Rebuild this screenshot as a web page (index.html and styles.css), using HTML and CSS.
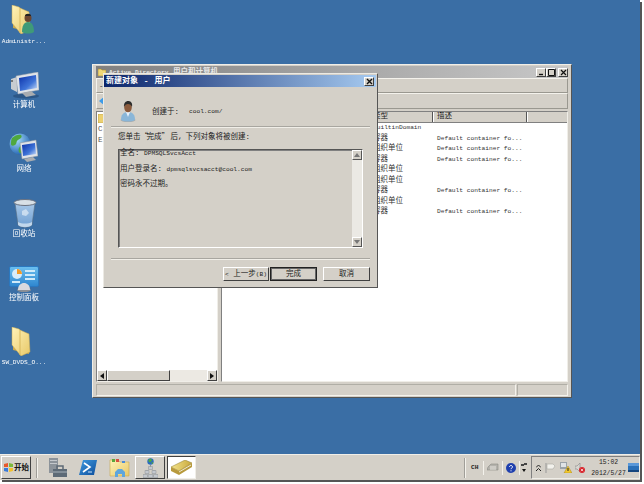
FILE: index.html
```html
<!DOCTYPE html>
<html lang="zh">
<head>
<meta charset="utf-8">
<title>新建对象 - 用户</title>
<link rel="stylesheet" href="styles.css">
</head>
<body>
<svg class="defs" aria-hidden="true">
  <defs>
    <linearGradient id="gFolder" x1="0" y1="0" x2="1" y2="1"><stop offset="0" stop-color="#fff3b8"/><stop offset="1" stop-color="#e8c868"/></linearGradient>
    <linearGradient id="gScreen" x1="0" y1="0" x2="1" y2="1"><stop offset="0" stop-color="#0a2fa8"/><stop offset=".6" stop-color="#3f74d8"/><stop offset="1" stop-color="#cfe2fa"/></linearGradient>
    <linearGradient id="gBin" x1="0" y1="0" x2="0" y2="1"><stop offset="0" stop-color="#a8c8e8"/><stop offset="1" stop-color="#6f9fd2"/></linearGradient>
    <linearGradient id="gPanel" x1="0" y1="0" x2="0" y2="1"><stop offset="0" stop-color="#6cc0f0"/><stop offset="1" stop-color="#2e86cf"/></linearGradient>
    <radialGradient id="gGlobe" cx=".35" cy=".3" r=".8"><stop offset="0" stop-color="#a8dcf8"/><stop offset="1" stop-color="#1a5cae"/></radialGradient>
    <linearGradient id="gPs" x1="0" y1="0" x2="1" y2="1"><stop offset="0" stop-color="#3f9be0"/><stop offset="1" stop-color="#0d4d9c"/></linearGradient>
    <linearGradient id="gBook" x1="0" y1="0" x2="1" y2="0"><stop offset="0" stop-color="#f4e48c"/><stop offset="1" stop-color="#c8a83c"/></linearGradient>
    <symbol id="sFolder" viewBox="0 0 20 29">
      <path d="M2 1l7 2 1 2 8 2v20l-16-4z" fill="#c9a94e"/>
      <path d="M1 0l7 2 1 1 9 4 1 18-9 4-9-11z" fill="url(#gFolder)" stroke="#c8a850" stroke-width=".5"/>
      <path d="M9 3v25" stroke="#d8b85c" stroke-width="1"/>
    </symbol>
    <symbol id="sUser" viewBox="0 0 16 21">
      <ellipse cx="8" cy="19" rx="7.5" ry="2" fill="#555" opacity=".3"/>
      <path d="M1 19c0-5 2-8 7-8s7 3 7 8c-3 2-11 2-14 0z" fill="#8ab6d8"/>
      <path d="M6 11l2 5 2-5z" fill="#e8f0f8"/>
      <ellipse cx="8" cy="6.500" rx="3.800" ry="4.800" fill="#8a5a3c"/>
      <path d="M4 6c-.5-4 2-6 4-6s5 1 4 6c-1-2-2-3-4-3S5 4 4 6z" fill="#2c2c2c"/>
    </symbol>
  </defs>
</svg>

<div class="screen">
  <div class="desktop">
    <div class="icons">
      <div class="dicon">
        <svg class="ic-admin" width="24" height="29" viewBox="0 0 24 29">
          <use href="#sFolder" width="20" height="29"/>
          <ellipse cx="17" cy="13" rx="3.500" ry="4" fill="#6b4630"/>
          <path d="M14 11c0-3 6-3 6 0z" fill="#222"/>
          <path d="M11 27c0-6 2-10 6-10s6 4 6 10c-3 2-9 2-12 0z" fill="#3f9a78"/>
        </svg>
        <span class="dlabel latin">Administr...</span>
      </div>
      <div class="dicon">
        <svg class="ic-comp" width="29" height="27" viewBox="0 0 29 27">
          <ellipse cx="16" cy="24" rx="13" ry="2.500" fill="#20456f" opacity=".55"/>
          <path d="M1 7l6-2v15l-6-3z" fill="#c8ccd0"/>
          <path d="M1 8h2v2H1z" fill="#777"/>
          <path d="M6 4l22-4 1 18-21 4z" fill="#dfe3e8" stroke="#9aa0a8" stroke-width=".5"/>
          <path d="M9 6l17-3 1 13-17 3z" fill="url(#gScreen)"/>
          <path d="M12 21l9-2 5 4-10 2z" fill="#a8acb0"/>
        </svg>
        <span class="dlabel">计算机</span>
      </div>
      <div class="dicon">
        <svg class="ic-net" width="29" height="30" viewBox="0 0 29 30">
          <circle cx="11" cy="11" r="10.500" fill="url(#gGlobe)"/>
          <path d="M3 5c3-3 7-4 9-3 2 2-1 4-3 5s-1 4-3 5-4 1-4-1 0-4 1-6zM12 13c3 0 4 2 3 4s-2 4-4 3-2-6 1-7z" fill="#4fa83e"/>
          <path d="M11 10l16-3 2 16-16 3z" fill="#dfe3e8" stroke="#8a9098" stroke-width=".5"/>
          <path d="M13 12l13-2 1 11-13 2z" fill="url(#gScreen)"/>
          <path d="M15 26l9-2 3 3-9 2z" fill="#a8acb0"/>
        </svg>
        <span class="dlabel">网络</span>
      </div>
      <div class="dicon">
        <svg class="ic-bin" width="24" height="30" viewBox="0 0 24 30">
          <path d="M2 5l3 22c3 3 11 3 14 0l3-22z" fill="url(#gBin)" stroke="#5a6e82" stroke-width=".6"/>
          <ellipse cx="12" cy="4.500" rx="11" ry="3" fill="#d8e0e6" stroke="#6a7280" stroke-width="1"/>
          <path d="M9 13l4-2 3 4-3 3-4-1zM5 24c4 2 10 2 14 0v3c-3 3-11 3-14 0z" fill="#dbe8f4" opacity=".75"/>
        </svg>
        <span class="dlabel">回收站</span>
      </div>
      <div class="dicon">
        <svg class="ic-cp" width="30" height="26" viewBox="0 0 30 26">
          <ellipse cx="15" cy="24" rx="7" ry="2" fill="#8a8f96"/>
          <rect x=".5" y=".5" width="29" height="20" rx="1.500" fill="url(#gPanel)" stroke="#2a78c0"/>
          <circle cx="8" cy="8" r="5" fill="#d7ecfa"/>
          <path d="M8 8V3a5 5 0 0 1 5 5z" fill="#f09a28"/>
          <path d="M16 4h10v2H16zM16 8h10v2H16zM16 12h10v2H16zM3 15h8v2H3z" fill="#cfeaf9"/>
          <path d="M9 24c0-5 3-7 6-7s6 2 6 7z" fill="#d8dade"/>
        </svg>
        <span class="dlabel">控制面板</span>
      </div>
      <div class="dicon">
        <svg class="ic-folder" width="20" height="29"><use href="#sFolder" width="20" height="29"/></svg>
        <span class="dlabel latin">SW_DVDS_O...</span>
      </div>
    </div>
  </div>

  <section class="window">
    <div class="wtitle">
      <svg class="wtitle-ic" width="8" height="8" viewBox="0 0 8 8"><path d="M0 1h3l1 1h4v6H0z" fill="#f0d878" stroke="#a88c30" stroke-width=".6"/></svg>
      <span class="wtitle-text"><span class="latin">Active Directory</span> 用户和计算机</span>
      <span class="wbtns">
        <span class="tbtn"><svg width="9" height="9" viewBox="0 0 9 9"><path d="M2 6.500h4" stroke="#111" stroke-width="1.400"/></svg></span>
        <span class="tbtn"><svg width="9" height="9" viewBox="0 0 9 9"><path d="M1.500 1.500h6v6h-6z" fill="none" stroke="#111"/></svg></span>
        <span class="tbtn tbtn-gap"><svg width="9" height="9" viewBox="0 0 9 9"><path d="M2 2l5 5M7 2L2 7" stroke="#111" stroke-width="1.200"/></svg></span>
      </span>
    </div>
    <div class="wbar"><span class="barmark">-</span></div>
    <div class="wbar wbar-tools">
      <svg width="6" height="10" viewBox="0 0 6 10"><path d="M6 0v10L0 5z" fill="#3d9be8"/></svg>
    </div>
    <div class="panes">
      <div class="pane tree">
        <div class="tree-body">
          <svg width="6" height="9" viewBox="0 0 6 9"><path d="M0 0h6v9H0z" fill="#ecd070" stroke="#a88c30" stroke-width=".5"/></svg>
          <span class="tree-row">C</span>
          <span class="tree-row">E</span>
        </div>
        <div class="hscroll">
          <span class="sbtn"><svg width="4" height="6" viewBox="0 0 4 6"><path d="M4 0v6L0 3z" fill="#111"/></svg></span>
          <span class="sthumb"></span>
          <span class="strack"></span>
          <span class="sbtn"><svg width="4" height="6" viewBox="0 0 4 6"><path d="M0 0v6l4-3z" fill="#111"/></svg></span>
        </div>
      </div>
      <div class="pane list">
        <div class="lhead">
          <span class="lh lh-name"></span>
          <span class="lh lh-type">类型</span>
          <span class="lh lh-desc">描述</span>
          <span class="lh lh-rest"></span>
        </div>
        <div class="lrow"><span class="ltype"><span class="latin">builtinDomain</span></span></div>
        <div class="lrow"><span class="ltype">容器</span><span class="ldesc latin">Default container fo...</span></div>
        <div class="lrow"><span class="ltype">组织单位</span><span class="ldesc latin">Default container fo...</span></div>
        <div class="lrow"><span class="ltype">容器</span><span class="ldesc latin">Default container fo...</span></div>
        <div class="lrow"><span class="ltype">组织单位</span></div>
        <div class="lrow"><span class="ltype">组织单位</span></div>
        <div class="lrow"><span class="ltype">容器</span><span class="ldesc latin">Default container fo...</span></div>
        <div class="lrow"><span class="ltype">组织单位</span></div>
        <div class="lrow"><span class="ltype">容器</span><span class="ldesc latin">Default container fo...</span></div>
      </div>
    </div>
    <div class="status">
      <span class="stcell st-main"></span>
      <span class="stcell st-side"></span>
    </div>
  </section>

  <section class="dialog">
    <div class="dtitle">
      <span class="dtitle-text">新建对象 - 用户</span>
      <span class="tbtn dclose"><svg width="9" height="9" viewBox="0 0 9 9"><path d="M2 2l5 5M7 2L2 7" stroke="#111" stroke-width="1.400"/></svg></span>
    </div>
    <div class="dbody">
      <div class="dhead">
        <svg class="duser" width="16" height="21"><use href="#sUser" width="16" height="21"/></svg>
        <span class="dcreate">创建于:</span>
        <span class="latin dpath">cool.com/</span>
      </div>
      <div class="rule"></div>
      <p class="dmsg">您单击<span class="ql">“</span>完成<span class="qr">”</span>后<span class="cm">,</span>下列对象将被创建:</p>
      <div class="summary">
        <div class="sumtext">
          <p class="sumline">全名: <span class="latin">DPMSQLSvcsAcct</span></p>
          <p class="sumline">用户登录名: <span class="latin">dpmsqlsvcsacct@cool.com</span></p>
          <p class="sumline">密码永不过期。</p>
        </div>
        <div class="vscroll">
          <span class="vbtn"><svg width="6" height="4" viewBox="0 0 6 4"><path d="M0 4h6L3 0z" fill="#777"/></svg></span>
          <span class="vtrack"></span>
          <span class="vbtn"><svg width="6" height="4" viewBox="0 0 6 4"><path d="M0 0h6L3 4z" fill="#777"/></svg></span>
        </div>
      </div>
      <div class="rule rule-low"></div>
      <div class="dbtns">
        <button class="btn btn-back"><span class="latin">&lt;</span> 上一步<span class="latin">(B)</span></button>
        <button class="btn btn-default">完成</button>
        <button class="btn btn-cancel">取消</button>
      </div>
    </div>
  </section>

  <footer class="taskbar">
    <button class="start">
      <svg width="9" height="9" viewBox="0 0 9 9"><path d="M0 1l4-1v4H0z" fill="#e8582a"/><path d="M5 0l4 1v3H5z" fill="#7cb83a"/><path d="M0 5h4v4L0 8z" fill="#3a7ad8"/><path d="M5 5h4v3L5 9z" fill="#f2c02c"/></svg>
      <span>开始</span>
    </button>
    <span class="tsep"></span>
    <span class="qbtn qb-server">
      <svg width="19" height="20" viewBox="0 0 19 20"><path d="M1 0h9v15H1z" fill="#8c939a"/><path d="M2 2h7v1H2zM2 5h7v1H2z" fill="#c4c8cc"/><path d="M5 11h14v8H5z" fill="#5d6a76"/><path d="M9 11V8h6v3" fill="none" stroke="#5d6a76" stroke-width="1.500"/><path d="M5 14h14" stroke="#a8b2ba"/></svg>
    </span>
    <span class="qbtn qb-ps">
      <svg width="18" height="15" viewBox="0 0 18 15"><path d="M4 0h14l-3 15H0z" fill="url(#gPs)"/><path d="M5 3l6 4-7 5" fill="none" stroke="#fff" stroke-width="1.600"/><path d="M9 12h4" stroke="#cfe4f8"/></svg>
    </span>
    <span class="qbtn qb-exp">
      <svg width="21" height="19" viewBox="0 0 21 19"><path d="M1 2h8l2 2h9v14H1z" fill="url(#gFolder)" stroke="#c8a850" stroke-width=".6"/><path d="M3 1h3v3H3z" fill="#5ca83c"/><path d="M7 1h3v3H7z" fill="#d85040"/><path d="M13 3h3v2h-3z" fill="#4a8ad8"/><path d="M6 14l3-3h4l3 3v5h-3v-3H9v3H6z" fill="#5fa6dc"/></svg>
    </span>
    <span class="taskitem">
      <svg width="15" height="20" viewBox="0 0 15 20"><circle cx="7.500" cy="3.500" r="3.200" fill="#2a6cc0"/><path d="M5.500 1.500l2.500-1 1 2-2 2-1.500-1zM8 5l2-1v2z" fill="#4fa83e"/><path d="M7.500 7v2M4 12v2M11 12v2" stroke="#777" stroke-width=".7"/><path d="M5.500 8.500h4v3h-4zM2 12.500h4v3H2zM9 12.500h4v3H9zM0 16.500h4.500v3H0zM5.300 16.500h4.500v3H5.300zM10.500 16.500H15v3h-4.500z" fill="#c4c8ce" stroke="#7a8088" stroke-width=".4"/></svg>
    </span>
    <span class="taskitem taskitem-active">
      <svg width="21" height="15" viewBox="0 0 21 15"><path d="M0 7l14-7 7 3-13 8z" fill="url(#gBook)" stroke="#8c7a2c" stroke-width=".5"/><path d="M0 7l8 4v4l-8-4zM8 11l13-8v4L8 15z" fill="#b89a3c"/><path d="M8 12l12-7" stroke="#f0ead0"/></svg>
    </span>
    <span class="tspacer"></span>
    <span class="tsep"></span>
    <span class="lang latin">CH</span>
    <span class="tdiv"></span>
    <svg class="kbd" width="12" height="9" viewBox="0 0 12 9"><path d="M1 4l3-3h7v6H0z" fill="#b4b2ac" stroke="#8a8a84" stroke-width=".6"/><path d="M3 4h6M3 6h6" stroke="#e8e6e0"/></svg>
    <span class="tdiv"></span>
    <svg class="help" width="10" height="10" viewBox="0 0 10 10"><circle cx="5" cy="5" r="5" fill="#1f3fae"/><path d="M3.500 4c0-2 3-2 3 0 0 1-1.500 1-1.500 2.200M5 7.300v1" fill="none" stroke="#fff" stroke-width="1"/></svg>
    <span class="tdiv"></span>
    <span class="tinybtns">
      <svg width="6" height="4" viewBox="0 0 6 4"><path d="M0 1h3v2H0zM3 0h3v2H3z" fill="#444"/></svg>
      <svg width="4" height="3" viewBox="0 0 4 3"><path d="M0 0h4L2 3z" fill="#111"/></svg>
    </span>
    <div class="tray">
      <svg width="5" height="6" viewBox="0 0 5 6"><path d="M0 2.500L2.500 0 5 2.500M0 6L2.500 3.500 5 6" fill="none" stroke="#222"/></svg>
      <svg class="tr-flag" width="11" height="10" viewBox="0 0 11 10"><path d="M1 0v10" stroke="#999"/><path d="M2 1h6l2 2-2 3H2z" fill="#f2f1ec" stroke="#a8a8a2" stroke-width=".6"/></svg>
      <svg class="tr-net" width="12" height="11" viewBox="0 0 12 11"><path d="M0 0h7v7H0z" fill="#9aa2a8"/><path d="M1 1h5v4H1z" fill="#dfe3e6"/><path d="M8 4l4 7H4z" fill="#f2c82c" stroke="#9a7c10" stroke-width=".4"/><path d="M8 6v3" stroke="#222"/></svg>
      <svg class="tr-snd" width="10" height="10" viewBox="0 0 10 10"><path d="M0 3h2l3-3v9L2 6H0z" fill="#d8d6d0" stroke="#888" stroke-width=".6"/><circle cx="7" cy="7" r="3" fill="#d8262c"/><path d="M5.800 5.800l2.400 2.400M8.200 5.800L5.800 8.200" stroke="#fff" stroke-width=".7"/></svg>
      <span class="clock">
        <span class="latin">15:02</span>
        <span class="latin">2012/5/27</span>
      </span>
      <svg class="tr-desk" width="11" height="9" viewBox="0 0 11 9"><path d="M0 0h11v9H0z" fill="#2a70b8"/><path d="M0 0h11v3H0z" fill="#5a98d8"/><path d="M0 7h11v2H0z" fill="#16467e"/></svg>
    </div>
  </footer>
</div>
</body>
</html>
```

FILE: styles.css
```css
* { box-sizing: border-box; }
html, body { margin: 0; padding: 0; background: #fff; width: 644px; height: 484px; overflow: hidden; }
body { font: 7.5px/10px "Liberation Mono", "Noto Sans CJK SC", monospace; color: #222; }
p { margin: 0; }
.defs { position: absolute; width: 0; height: 0; }
.latin { font-size: 6.2px; }

.screen {
  position: relative;
  width: 640px;
  height: 480px;
  background: #3a6ea5;
  box-shadow: 2px 2px 0 #555;
  display: flex;
  flex-direction: column;
  filter: blur(.3px);
  overflow: hidden;
}

/* desktop */
.desktop { flex: 1; min-height: 0; }
.icons { display: grid; grid-auto-rows: 64.2px; width: 48px; }
.dicon { position: relative; display: flex; flex-direction: column; align-items: center; }
.dicon svg { position: absolute; }
.dlabel { position: absolute; left: 0; right: 0; top: 36px; text-align: center; color: #fff; white-space: nowrap; }
.dlabel.latin { top: 37px; }
.ic-admin { left: 11px; top: 5px; }
.ic-comp { left: 10px; top: 8px; }
.ic-net { left: 9px; top: 5px; }
.ic-bin { left: 13px; top: 5px; }
.ic-cp { left: 9px; top: 9px; }
.ic-folder { left: 11px; top: 6px; }

/* background window */
.window {
  position: absolute;
  left: 92px;
  top: 64px;
  width: 480px;
  height: 334px;
  background: #d4d0c8;
  border: 1px solid #f0eee8;
  border-right-color: #555;
  border-bottom-color: #555;
  box-shadow: inset 1px 1px 0 #d4d0c8;
  padding: 1px 3px 1px 3px;
  display: flex;
  flex-direction: column;
}
.wtitle {
  height: 12px;
  background: linear-gradient(90deg, #808080, #c8c8c8);
  display: flex;
  align-items: center;
  padding: 0 0 0 2px;
  gap: 3px;
  color: #e8e8e8;
  flex: none;
}
.wtitle-text { font-weight: bold; white-space: nowrap; }
.wbtns { margin-left: auto; display: flex; }
.tbtn {
  width: 10px;
  height: 9px;
  background: #d4d0c8;
  border: 1px solid;
  border-color: #fff #404040 #404040 #fff;
  display: flex;
  align-items: center;
  justify-content: center;
  overflow: hidden;
}
.tbtn svg { flex: none; }
.tbtn-gap { margin-left: 2px; }
.wbar {
  height: 15px;
  flex: none;
  border: 1px solid;
  border-color: #f4f2ec #9a9890 #9a9890 #f4f2ec;
  padding-left: 2px;
  display: flex;
  align-items: center;
  color: #333;
}
.wbar-tools { height: 16px; }
.panes { flex: 1; display: flex; gap: 3px; min-height: 0; margin-top: 2px; }
.pane {
  background: #fff;
  border: 1px solid;
  border-color: #808080 #f0eee8 #f0eee8 #808080;
  display: flex;
  flex-direction: column;
  overflow: hidden;
}
.tree { width: 122px; }
.tree-body { flex: 1; padding: 2px 0 0 1px; display: flex; flex-direction: column; align-items: flex-start; color: #555; }
.tree-row { line-height: 10px; margin-top: 1px; }
.hscroll { height: 11px; flex: none; display: flex; background: #ece9e3; }
.sbtn {
  width: 10px;
  flex: none;
  background: #d4d0c8;
  border: 1px solid;
  border-color: #fff #404040 #404040 #fff;
  display: flex;
  align-items: center;
  justify-content: center;
}
.sthumb { width: 63px; background: #d4d0c8; border: 1px solid; border-color: #fff #404040 #404040 #fff; }
.strack { flex: 1; }
.list { flex: 1; }
.lhead { height: 11px; display: flex; flex: none; background: #d4d0c8; border-bottom: 1px solid #808080; }
.lh { border-right: 1px solid #555; line-height: 9px; padding-left: 2px; box-shadow: inset 1px 0 0 #fff; white-space: nowrap; }
.lh-name { width: 140px; }
.lh-type { width: 71px; padding-left: 11px; }
.lh-desc { width: 94px; padding-left: 4px; }
.lh-rest { flex: 1; border-right: 0; }
.lrow { height: 10.500px; display: flex; line-height: 9px; color: #333; white-space: nowrap; }
.ltype { width: 215px; padding-left: 151px; flex: none; }

.status { height: 12px; flex: none; display: flex; margin-top: 2px; }
.stcell { border: 1px solid; border-color: #b0aea6 #f4f2ec #f4f2ec #b0aea6; }
.st-main { width: 420px; }
.st-side { flex: 1; margin-left: 1px; }

/* dialog */
.dialog {
  position: absolute;
  left: 103px;
  top: 73px;
  width: 275px;
  height: 215px;
  background: #d4d0c8;
  border: 1px solid #ecEAe4;
  border-right-color: #555;
  border-bottom-color: #555;
  padding: 1px 1px 0 0;
}
.dtitle {
  height: 12px;
  background: linear-gradient(90deg, #0a246a, #a6caf0);
  display: flex;
  align-items: center;
  justify-content: space-between;
  padding: 0 2px 0 2px;
  color: #fff;
}
.dtitle-text { font-size: 8px; font-weight: bold; word-spacing: 1px; white-space: pre; }
.dbody { padding: 0 6px 0 7px; }
.dhead { height: 39px; display: flex; align-items: center; padding: 10px 0 0 9px; }
.duser { flex: none; }
.dcreate { margin-left: 16px; }
.dpath { margin-left: 10px; }
.rule { height: 2px; border-top: 1px solid #a8a6a0; border-bottom: 1px solid #f0eee8; }
.dmsg { margin: 5px 0 0 7px; height: 10px; line-height: 9px; white-space: nowrap; }
.ql, .qr { font-family: "Noto Sans CJK SC", sans-serif; line-height: 0; }
.ql { margin-right: -1.5px; }
.qr { margin-right: 1.5px; }
.cm { padding-right: 3px; }
.summary {
  margin: 6px 7px 0 7px;
  height: 99px;
  display: flex;
  border: 1px solid;
  border-color: #555 #fff #fff #555;
  box-shadow: inset 1px 1px 0 #808080;
}
.sumtext { flex: 1; padding: 0 0 0 1px; }
.sumline { height: 15.500px; line-height: 6px; }
.vscroll { width: 10px; display: flex; flex-direction: column; background: #ebe9e4; }
.vbtn {
  height: 10px;
  flex: none;
  background: #d4d0c8;
  border: 1px solid;
  border-color: #fff #555 #555 #fff;
  display: flex;
  align-items: center;
  justify-content: center;
}
.vtrack { flex: 1; }
.rule-low { margin-top: 10px; }
.dbtns { display: flex; justify-content: flex-end; margin-top: 7px; }
.btn {
  height: 14px;
  padding: 0;
  font: inherit;
  line-height: 10px;
  color: #222;
  background: #d4d0c8;
  border: 1px solid;
  border-color: #fff #404040 #404040 #fff;
  white-space: nowrap;
  overflow: hidden;
}
.btn-back { width: 46px; }
.btn-default { width: 47px; margin-left: 1px; border: 1px solid #222; outline: 1px solid #666; outline-offset: -2px; }
.btn-cancel { width: 47px; margin-left: 6px; }

/* taskbar */
.taskbar {
  height: 26px;
  flex: none;
  background: #d4d0c8;
  border-top: 1px solid #f0eee8;
  display: flex;
  align-items: center;
  padding-left: 1px;
}
.start {
  width: 30px;
  height: 23px;
  padding: 0 0 0 2px;
  display: flex;
  align-items: center;
  gap: 1px;
  font: inherit;
  font-weight: bold;
  color: #111;
  background: #d4d0c8;
  border: 1px solid;
  border-color: #fff #404040 #404040 #fff;
}
.tsep { width: 2px; height: 20px; margin-left: 5px; background: #f4f2ec; border-left: 1px solid #a09e98; flex: none; }
.qbtn { display: flex; flex: none; }
.qb-server { margin-left: 10px; }
.qb-ps { margin-left: 12px; }
.qb-exp { margin-left: 12px; }
.taskitem {
  width: 30px;
  height: 23px;
  flex: none;
  margin-left: 5px;
  display: flex;
  align-items: center;
  justify-content: center;
  border: 1px solid;
  border-color: #fff #404040 #404040 #fff;
}
.taskitem-active { width: 29px; margin-left: 2px; background: #fff; border-color: #404040 #f0eee8 #f0eee8 #404040; }
.tspacer { flex: 1; }
.lang { margin-left: 5px; font-weight: bold; width: 9px; flex: none; }
.tdiv { width: 1px; height: 14px; background: #f4f2ec; margin: 0 3px; flex: none; }
.kbd { flex: none; }
.help { flex: none; }
.tinybtns { display: flex; flex-direction: column; align-items: center; gap: 2px; width: 6px; flex: none; margin: 0 3px 0 -2px; }
.tray {
  width: 109px;
  height: 23px;
  flex: none;
  display: flex;
  align-items: center;
  padding-left: 4px;
  margin-left: 1px;
  border: 1px solid;
  border-color: #808080 #f0eee8 #f0eee8 #808080;
}
.tr-flag { margin-left: 4px; }
.tr-net { margin-left: 4px; }
.tr-snd { margin-left: 3px; }
.clock { display: flex; flex-direction: column; align-items: center; width: 35px; margin-left: 6px; color: #222; }
.clock .latin { line-height: 11px; font-size: 6.4px; }
.tr-desk { margin-left: 2px; }
```
